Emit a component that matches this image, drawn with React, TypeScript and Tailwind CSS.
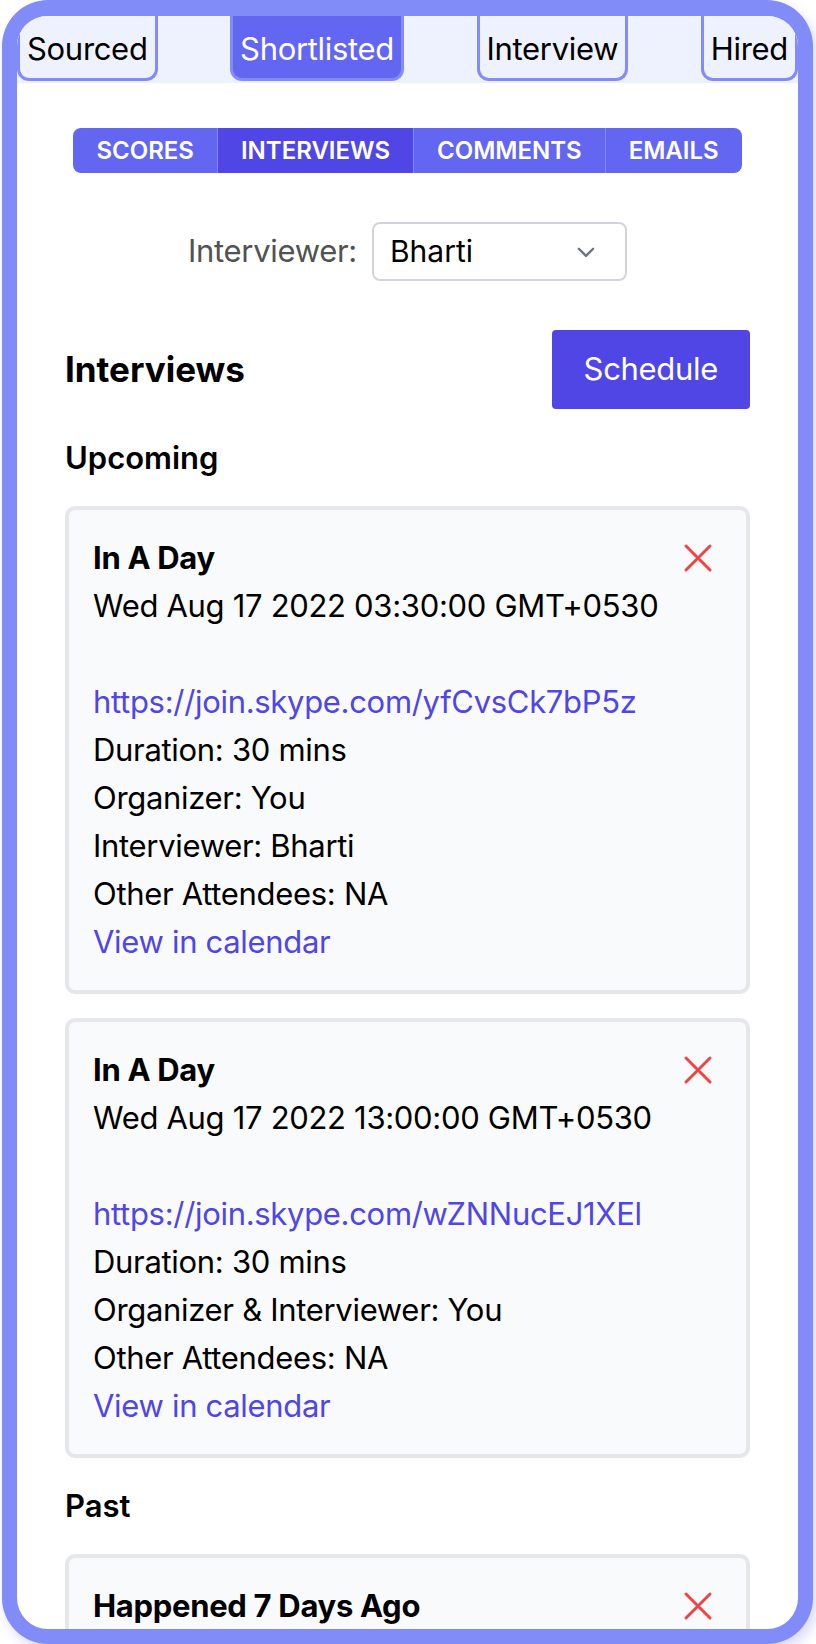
import React from "react";

const stages = ["Sourced", "Shortlisted", "Interview", "Hired"];
const sections = ["Scores", "Interviews", "Comments", "Emails"];

type Meeting = {
  when: string;
  date: string;
  link: string;
  lines: string[];
};

const upcoming: Meeting[] = [
  {
    when: "In A Day",
    date: "Wed Aug 17 2022 03:30:00 GMT+0530",
    link: "https://join.skype.com/yfCvsCk7bP5z",
    lines: ["Duration: 30 mins", "Organizer: You", "Interviewer: Bharti", "Other Attendees: NA"],
  },
  {
    when: "In A Day",
    date: "Wed Aug 17 2022 13:00:00 GMT+0530",
    link: "https://join.skype.com/wZNNucEJ1XEl",
    lines: ["Duration: 30 mins", "Organizer & Interviewer: You", "Other Attendees: NA"],
  },
];

const past: Meeting[] = [
  {
    when: "Happened 7 Days Ago",
    date: "Wed Aug 10 2022 11:00:00 GMT+0530",
    link: "https://join.skype.com/kQxPp2mLsT9a",
    lines: ["Duration: 30 mins", "Organizer: You", "Interviewer: Bharti", "Other Attendees: NA"],
  },
];

const CloseIcon = () => (
  <svg
    className="w-[48px] h-[48px] shrink-0 text-[#ef4444]"
    viewBox="0 0 24 24"
    fill="none"
    stroke="currentColor"
    strokeWidth={1.5}
  >
    <path strokeLinecap="round" strokeLinejoin="round" d="M6 18 18 6M6 6l12 12" />
  </svg>
);

const MeetingCard = ({ m }: { m: Meeting }) => {
  return (
    <div className="mb-[24px] border-[4px] border-[#e5e7eb] rounded-[10px] bg-[#f9fafb] px-[24px] pt-[24px] pb-[24px]">
      <div className="flex justify-between items-start">
        <div className="text-[31px] tracking-[-0.01em] leading-[48px] text-black">
          <div className="font-bold">{m.when}</div>
          <div className="whitespace-nowrap">{m.date}</div>
          <div className="h-[48px]" />
          <div className="text-[#4f46e5]">{m.link}</div>
          {m.lines.map((l) => (
            <div key={l}>{l}</div>
          ))}
          <div className="text-[#4f46e5]">View in calendar</div>
        </div>
        <CloseIcon />
      </div>
    </div>
  );
};

export default function App() {
  return (
    <div className="min-h-screen bg-white font-['Inter',sans-serif]">
      <div className="ml-[2px] w-[811px] h-[1644px] rounded-[46px] border-[15px] border-t-[16px] border-[#818cf8] overflow-hidden bg-white flex flex-col shadow-[4px_6px_12px_rgba(99,102,241,0.25)]">
        {/* stage tabs */}
        <div className="h-[67px] shrink-0 flex justify-between items-start bg-[#eef2ff]">
          {stages.map((s) => (
            <div
              key={s}
              className={
                s === "Shortlisted"
                  ? "h-[65px] pt-[4px] px-[7px] flex items-center border-x-[3px] border-b-[3px] border-[#818cf8] rounded-b-[12px] bg-[#6366f1] text-white text-[31px] tracking-[-0.01em]"
                  : "h-[65px] pt-[4px] px-[7px] flex items-center border-x-[3px] border-b-[3px] border-[#818cf8] rounded-b-[12px] text-black text-[31px] tracking-[-0.01em]"
              }
            >
              {s}
            </div>
          ))}
        </div>

        <div className="px-[48px]">
          {/* section switcher */}
          <div className="mt-[45px] mx-auto w-fit flex rounded-[8px] overflow-hidden">
            {sections.map((s, i) => (
              <div
                key={s}
                className={
                  (s === "Interviews" ? "bg-[#4f46e5] " : "bg-[#6366f1] ") +
                  (i > 0 ? "border-l border-[#818cf8] " : "") +
                  "h-[45px] px-[23px] flex items-center uppercase text-white text-[24px] font-semibold"
                }
              >
                {s}
              </div>
            ))}
          </div>

          {/* interviewer filter */}
          <div className="mt-[49px] flex justify-center items-center gap-[15px]">
            <span className="text-[31px] tracking-[-0.01em] text-[#525252]">Interviewer:</span>
            <div className="w-[255px] h-[59px] pl-[16px] pr-[26px] flex items-center justify-between border-2 border-[#d1d5db] rounded-[8px] bg-white">
              <span className="text-[30px] text-black">Bharti</span>
              <svg className="w-[26px] h-[26px]" viewBox="0 0 20 20" fill="none" stroke="#6b7280" strokeWidth={1.8}>
                <path strokeLinecap="round" strokeLinejoin="round" d="M4.5 7.5l5.5 5.5 5.5-5.5" />
              </svg>
            </div>
          </div>

          <div className="mt-[49px] flex justify-between items-center">
            <h2 className="text-[35px] font-bold text-black">Interviews</h2>
            <button className="h-[79px] px-[32px] rounded-[4px] bg-[#4f46e5] text-white text-[31px] tracking-[-0.01em]">
              Schedule
            </button>
          </div>

          <h3 className="mt-[25px] mb-[24px] text-[31px] leading-[48px] font-semibold text-black">Upcoming</h3>
          {upcoming.map((m) => (
            <MeetingCard key={m.date} m={m} />
          ))}

          <h3 className="mb-[24px] text-[31px] leading-[48px] font-semibold text-black">Past</h3>
          {past.map((m) => (
            <MeetingCard key={m.date} m={m} />
          ))}
        </div>
      </div>
    </div>
  );
}
